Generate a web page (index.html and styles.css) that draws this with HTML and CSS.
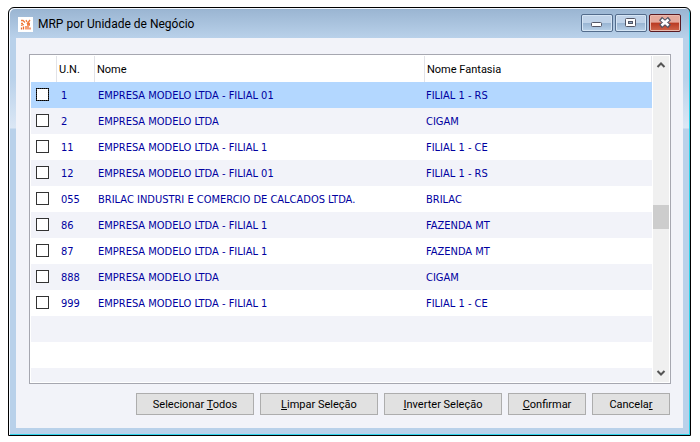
FILE: index.html
```
<!DOCTYPE html>
<html lang="pt-BR">
<head>
<meta charset="utf-8">
<title>MRP por Unidade de Negócio</title>
<link rel="stylesheet" href="styles.css">
</head>
<body>
<main class="window">
  <header class="titlebar">
    <svg class="app-icon" viewBox="0 0 15 15" aria-hidden="true">
      <rect width="15" height="15" fill="#fff"/>
      <path d="M3 3.500h2l2 2M3 6.500h2M8 3l1 2M12 3l-3 4M12 6.500h-2M3 8.500l3-1M9 8h3" stroke="#f0783a" stroke-width="1.300" fill="none"/>
      <path d="M3.500 12.500v-2M5.500 12.500v-3M8 12.500V9M10 12.500V9M12 12.500v-2" stroke="#ee6a2c" stroke-width="1.300" fill="none"/>
    </svg>
    <h1 class="title">MRP por Unidade de Negócio</h1>
    <div class="window-buttons">
      <button class="win-btn" type="button" aria-label="Minimizar"><svg viewBox="0 0 30 16"><rect x="9.500" y="7.500" width="10" height="4" rx="1" fill="#fff" stroke="#535666"/></svg></button>
      <button class="win-btn" type="button" aria-label="Maximizar"><svg viewBox="0 0 30 16"><rect x="9.500" y="3.500" width="10" height="8" rx="1" fill="#fff" stroke="#535666"/><rect x="12.500" y="6.500" width="4" height="2" fill="#8fa9c4" stroke="#535666"/></svg></button>
      <button class="win-btn close" type="button" aria-label="Fechar"><svg viewBox="0 0 30 16"><path d="M10.500 3.500l9 8M19.500 3.500l-9 8" stroke="#535666" stroke-width="4.500"/><path d="M11.500 4.500l7 6M18.500 4.500l-7 6" stroke="#fff" stroke-width="2.500"/></svg></button>
    </div>
  </header>
  <section class="content">
    <div class="list">
      <div class="grid-area">
        <table class="grid">
          <colgroup><col class="c-check"><col class="c-un"><col class="c-name"><col></colgroup>
          <thead><tr><th></th><th>U.N.</th><th>Nome</th><th>Nome Fantasia</th></tr></thead>
          <tbody>
            <tr class="selected"><td><input type="checkbox" aria-label="1"></td><td>1</td><td>EMPRESA MODELO LTDA - FILIAL 01</td><td>FILIAL 1 - RS</td></tr>
            <tr><td><input type="checkbox" aria-label="2"></td><td>2</td><td>EMPRESA MODELO LTDA</td><td>CIGAM</td></tr>
            <tr><td><input type="checkbox" aria-label="11"></td><td>11</td><td>EMPRESA MODELO LTDA - FILIAL 1</td><td>FILIAL 1 - CE</td></tr>
            <tr><td><input type="checkbox" aria-label="12"></td><td>12</td><td>EMPRESA MODELO LTDA - FILIAL 01</td><td>FILIAL 1 - RS</td></tr>
            <tr><td><input type="checkbox" aria-label="055"></td><td>055</td><td>BRILAC INDUSTRI E COMERCIO DE CALCADOS LTDA.</td><td>BRILAC</td></tr>
            <tr><td><input type="checkbox" aria-label="86"></td><td>86</td><td>EMPRESA MODELO LTDA - FILIAL 1</td><td>FAZENDA MT</td></tr>
            <tr><td><input type="checkbox" aria-label="87"></td><td>87</td><td>EMPRESA MODELO LTDA - FILIAL 1</td><td>FAZENDA MT</td></tr>
            <tr><td><input type="checkbox" aria-label="888"></td><td>888</td><td>EMPRESA MODELO LTDA</td><td>CIGAM</td></tr>
            <tr><td><input type="checkbox" aria-label="999"></td><td>999</td><td>EMPRESA MODELO LTDA - FILIAL 1</td><td>FILIAL 1 - CE</td></tr>
          </tbody>
        </table>
        <div class="empty-rows"></div>
      </div>
      <div class="scrollbar" aria-hidden="true">
        <svg viewBox="0 0 16 18"><path d="M4.500 11L8 7.500l3.500 3.500" /></svg>
        <div class="track"><div class="thumb"></div></div>
        <svg viewBox="0 0 16 18"><path d="M4.500 7L8 10.500 11.500 7" /></svg>
      </div>
    </div>
    <div class="actions">
      <button class="btn wide" type="button">Selecionar <u>T</u>odos</button>
      <button class="btn wide" type="button"><u>L</u>impar Seleção</button>
      <button class="btn wide" type="button"><u>I</u>nverter Seleção</button>
      <button class="btn" type="button"><u>C</u>onfirmar</button>
      <button class="btn" type="button">Cancela<u>r</u></button>
    </div>
  </section>
</main>
</body>
</html>
```
FILE: styles.css
```
* { box-sizing: border-box; }

body {
  margin: 0;
  min-height: 100vh;
  padding: 7px 9px 6px 8px;
  display: flex;
  background: #fff;
  font-family: "DejaVu Sans Condensed", "DejaVu Sans", sans-serif;
  font-size: 11px;
}

.window {
  flex: 1;
  display: flex;
  flex-direction: column;
  padding: 0 7px 7px;
  border: 1px solid #000;
  border-radius: 6px 6px 0 0;
  background: linear-gradient(#99b4d1, #b9d1ea 30px, #b9d1ea 70px, #dbe7f5 120px, #b9d1ea 121px);
  box-shadow: inset 1px 1px #f4f9ff, inset -1px -1px #2fd3ea;
}

.titlebar {
  height: 30px;
  display: flex;
  align-items: center;
  padding: 2px 2px 0 2px;
}

.app-icon { width: 15px; height: 15px; }

.title {
  flex: 1;
  margin: 0 0 0 5px;
  font: 12px Roboto, sans-serif;
}

.window-buttons { display: flex; gap: 2px; padding-bottom: 2px; }

.win-btn {
  width: 32px;
  height: 18px;
  padding: 0;
  border: 1px solid #536c8c;
  border-radius: 2px;
  background: linear-gradient(#c0d3e9 50%, #98b4d2 50%, #b9d1e8);
  box-shadow: inset 0 0 0 1px #d5e5f5;
}

.win-btn svg { display: block; width: 30px; height: 16px; }

.close {
  border-color: #5a1a22;
  background: linear-gradient(#e5a99c 45%, #b93a22 50%, #d0674c);
  box-shadow: inset 0 0 0 1px #eab9ad;
}

.content {
  flex: 1;
  display: flex;
  flex-direction: column;
  padding: 16px 12px 13px 13px;
  gap: 9px;
  background: #f2f3f9;
}

.list {
  flex: 1;
  display: flex;
  padding: 1px;
  border: 1px solid #a6a7b0;
  background: #fff;
}

.grid-area { flex: 1; display: flex; flex-direction: column; margin-right: 1px; }

.grid {
  width: 100%;
  table-layout: fixed;
  border-collapse: separate;
  border-spacing: 0;
}

.c-check { width: 26px; }
.c-un { width: 38px; }
.c-name { width: 330px; }

.grid th, .grid td {
  height: 26px;
  padding: 0 0 0 3px;
  text-align: left;
  white-space: nowrap;
}

.grid th {
  padding-left: 2px;
  border-right: 1px solid #e2e3e8;
  font: 11px Roboto, sans-serif;
}

.grid td { color: #0000a0; }
.grid td:nth-child(2) { padding-left: 4px; }
.grid td:nth-child(4) { padding-left: 1px; }
.grid tbody tr:nth-child(even) { background: #f2f3f9; }
.grid tbody .selected { background: #b3d7ff; }

.grid input {
  appearance: none;
  display: block;
  width: 13px;
  height: 13px;
  margin: 0 0 1px 2px;
  border: 1px solid #333;
  background: #fff;
}

.selected input { outline: 1px dotted #000; outline-offset: -1px; }

.empty-rows {
  flex: 1;
  background: repeating-linear-gradient(#f2f3f9 0 26px, #fff 26px 52px);
}

.scrollbar { width: 16px; display: flex; flex-direction: column; background: #f0f0f0; }
.scrollbar svg { width: 16px; height: 18px; fill: none; stroke: #555; stroke-width: 2; }
.track { flex: 1; display: flex; flex-direction: column; }
.track::before { content: ""; flex: 131; }
.track::after { content: ""; flex: 135; }
.thumb { height: 24px; background: #cdcdcd; }

.actions { display: flex; justify-content: flex-end; gap: 6px; padding-right: 1px; }

.btn {
  width: 78px;
  height: 22px;
  padding: 0;
  border: 1px solid #adadad;
  background: #e1e1e1;
  color: #000;
  font: 11px Roboto, sans-serif;
}

.wide { width: 118px; }
```
